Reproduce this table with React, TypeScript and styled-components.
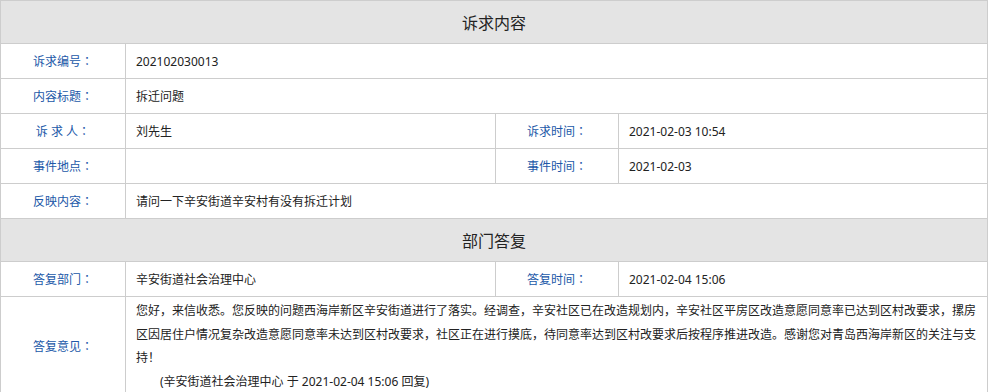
import React from "react";
import styled, { createGlobalStyle } from "styled-components";

const Global = createGlobalStyle`
  html, body { margin: 0; padding: 0; background: #ffffff; }
  body { font-family: "Noto Sans", "Noto Sans CJK SC", sans-serif; font-size: 12px; color: #222; }
`;

const Table = styled.table`
  width: 987px;
  table-layout: fixed;
  border-collapse: collapse;
  font-size: 12px;
`;

const SectionRow = styled.tr`
  height: 43px;
`;

const SectionTitle = styled.th`
  background: #e4e4e4;
  border: 1px solid #cdcdcd;
  font-size: 16px;
  font-weight: normal;
  color: #222;
  text-align: center;
  padding: 0;
`;

const Row = styled.tr<{ $tall?: boolean }>`
  height: ${(p) => (p.$tall ? "auto" : "35px")};
`;

const Label = styled.td`
  border: 1px solid #cdcdcd;
  color: #2158a8;
  text-align: center;
  padding: 0;
  white-space: pre;
`;

const Colon = styled.span`
  font-family: "Noto Sans CJK TC", sans-serif;
`;

const Value = styled.td`
  border: 1px solid #cdcdcd;
  color: #222;
  padding: 0 10px;
  text-align: left;
`;

const Reply = styled.td`
  border: 1px solid #cdcdcd;
  color: #222;
  padding: 2px 8px 2px 10px;
  line-height: 23.6px;
  text-align: left;
`;

const Signature = styled.div`
  padding-left: 24px;
`;

const L = ({ children }: { children: string }) => (
  <Label>
    {children}
    <Colon>：</Colon>
  </Label>
);

export default function App() {
  return (
    <>
      <Global />
      <Table>
        <colgroup>
          <col style={{ width: 125 }} />
          <col style={{ width: 370 }} />
          <col style={{ width: 123 }} />
          <col style={{ width: 369 }} />
        </colgroup>
        <tbody>
          <SectionRow>
            <SectionTitle colSpan={4}>诉求内容</SectionTitle>
          </SectionRow>
          <Row>
            <L>诉求编号</L>
            <Value colSpan={3}>202102030013</Value>
          </Row>
          <Row>
            <L>内容标题</L>
            <Value colSpan={3}>拆迁问题</Value>
          </Row>
          <Row>
            <L>诉 求 人</L>
            <Value>刘先生</Value>
            <L>诉求时间</L>
            <Value>2021-02-03 10:54</Value>
          </Row>
          <Row>
            <L>事件地点</L>
            <Value></Value>
            <L>事件时间</L>
            <Value>2021-02-03</Value>
          </Row>
          <Row>
            <L>反映内容</L>
            <Value colSpan={3}>请问一下辛安街道辛安村有没有拆迁计划</Value>
          </Row>
          <SectionRow>
            <SectionTitle colSpan={4}>部门答复</SectionTitle>
          </SectionRow>
          <Row>
            <L>答复部门</L>
            <Value>辛安街道社会治理中心</Value>
            <L>答复时间</L>
            <Value>2021-02-04 15:06</Value>
          </Row>
          <Row $tall>
            <L>答复意见</L>
            <Reply colSpan={3}>
              您好，来信收悉。您反映的问题西海岸新区辛安街道进行了落实。经调查，辛安社区已在改造规划内，辛安社区平房区改造意愿同意率已达到区村改要求，摞房区因居住户情况复杂改造意愿同意率未达到区村改要求，社区正在进行摸底，待同意率达到区村改要求后按程序推进改造。感谢您对青岛西海岸新区的关注与支持！
              <Signature>(辛安街道社会治理中心 于 2021-02-04 15:06 回复)</Signature>
            </Reply>
          </Row>
        </tbody>
      </Table>
    </>
  );
}
